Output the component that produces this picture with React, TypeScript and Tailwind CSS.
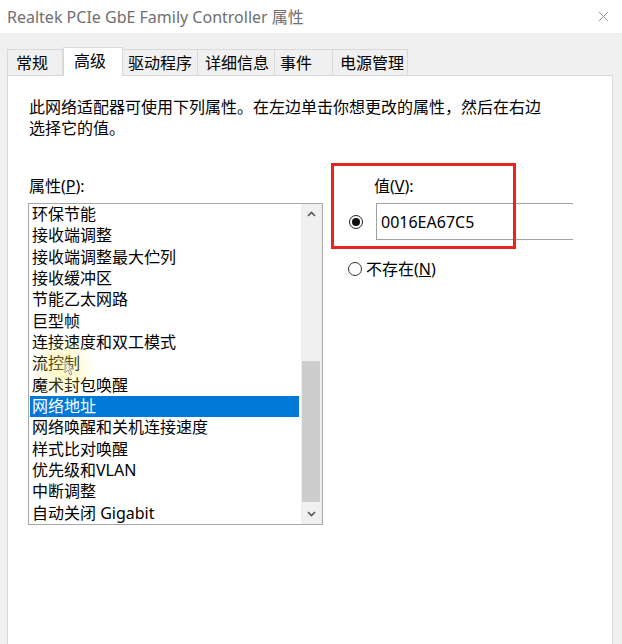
import { X } from "lucide-react";

const tabs = [
  { label: "常规", w: "w-[56px]", pl: "pl-[8px]" },
  { label: "高级", w: "w-[60px]", pl: "pl-[10px]", active: true },
  { label: "驱动程序", w: "w-[75px]", pl: "pl-[5px]" },
  { label: "详细信息", w: "w-[77px]", pl: "pl-[7px]" },
  { label: "事件", w: "w-[58px]", pl: "pl-[5px]" },
  { label: "电源管理", w: "w-[75px]", pl: "pl-[7px]" },
];

const props = [
  "环保节能",
  "接收端调整",
  "接收端调整最大伫列",
  "接收缓冲区",
  "节能乙太网路",
  "巨型帧",
  "连接速度和双工模式",
  "流控制",
  "魔术封包唤醒",
  "网络地址",
  "网络唤醒和关机连接速度",
  "样式比对唤醒",
  "优先级和VLAN",
  "中断调整",
  "自动关闭 Gigabit",
];

const Radio = ({ checked }: { checked?: boolean }) => (
  <span
    className={`w-[14px] h-[14px] rounded-full bg-white flex items-center justify-center shrink-0 ${
      checked ? "border-[1.5px] border-[#222]" : "border border-[#333]"
    }`}
  >
    {checked && <span className="w-[8px] h-[8px] rounded-full bg-[#111]" />}
  </span>
);

const Chevron = ({ up }: { up?: boolean }) => (
  <svg width="9" height="6" viewBox="0 0 9 6" className="text-[#555]">
    <polyline
      points={up ? "1,5 4.5,1.5 8,5" : "1,1 4.5,4.5 8,1"}
      fill="none"
      stroke="currentColor"
      strokeWidth="1.6"
    />
  </svg>
);

export default function App() {
  return (
    <div className="relative w-[622px] h-[644px] bg-[#f0f0f0] flex flex-col overflow-hidden text-black font-['Noto_Sans','Noto_Sans_CJK_SC',sans-serif]">
      {/* title bar */}
      <div className="h-[33px] bg-white flex items-center justify-between pl-[7px] pr-[10px] shrink-0">
        <span className="text-[16px] text-[#6f6f6f]">
          Realtek PCIe GbE Family Controller 属性
        </span>
        <X size={17} strokeWidth={1.2} className="text-[#8a8a8a]" />
      </div>

      {/* tabs */}
      <div className="h-[42px] flex items-end pl-[7px] shrink-0 relative z-10">
        {tabs.map((t, i) => (
          <div
            key={t.label}
            className={`${t.w} ${t.pl} text-[16px] flex items-center border-t border-r border-[#d9d9d9] ${
              i === 0 ? "border-l" : ""
            } ${
              t.active
                ? "h-[29px] -mb-px bg-white border-l pb-[2px]"
                : "h-[26px] bg-[#f0f0f0]"
            }`}
          >
            {t.label}
          </div>
        ))}
      </div>

      {/* panel */}
      <div className="flex-1 ml-[7px] mr-[9px] bg-white border border-b-0 border-[#d9d9d9] pl-[20px] pt-[21px]">
        <p className="text-[16px] leading-[21px] pl-[1px]">
          <span className="block whitespace-nowrap">
            此网络适配器可使用下列属性。在左边单击你想更改的属性，然后在右边
          </span>
          <span className="block">选择它的值。</span>
        </p>

        <div className="flex mt-[24px]">
          {/* left column */}
          <div className="pt-[13px]">
            <div className="text-[16px] leading-[21px] pl-[1px]">
              属性(<span className="underline">P</span>):
            </div>
            <div className="mt-[6px] w-[295px] h-[322px] border border-[#a8a8a8] flex">
              <ul className="flex-1 text-[16px]">
                {props.map((p) => (
                  <li
                    key={p}
                    className={`h-[21.33px] leading-[21.33px] whitespace-nowrap ${
                      p === "网络地址"
                        ? "bg-[#0078d7] text-white ml-[1px] mr-[2px] pl-[2px]"
                        : "pl-[3px]"
                    }`}
                  >
                    {p}
                  </li>
                ))}
              </ul>
              <div className="w-[21px] bg-[#f0f0f0] flex flex-col">
                <div className="h-[20px] flex items-center justify-center">
                  <Chevron up />
                </div>
                <div className="flex-1 flex flex-col">
                  <div className="h-[137px]" />
                  <div className="h-[141px] ml-[1px] mr-[2px] bg-[#cdcdcd]" />
                </div>
                <div className="h-[20px] flex items-center justify-center">
                  <Chevron />
                </div>
              </div>
            </div>
          </div>

          {/* right column */}
          <div className="relative flex-1 pt-[13px] pl-[26px]">
            <div className="text-[16px] leading-[21px] ml-[25px]">
              值(<span className="underline">V</span>):
            </div>
            <div className="flex items-center mt-[6px]">
              <Radio checked />
              <div className="ml-[13px] w-[197px] h-[37px] border-t border-l border-b border-[#a0a0a0] flex items-center pl-[4px] text-[16px]">
                0016EA67C5
              </div>
            </div>
            <div className="flex items-center mt-[18px] h-[21px] -ml-[1px]">
              <Radio />
              <span className="ml-[4px] text-[16px]">
                不存在(<span className="underline">N</span>)
              </span>
            </div>

            {/* red annotation box */}
            <div className="absolute left-[8px] top-0 w-[185px] h-[86px] border-[3px] border-[#e5261f]" />
          </div>
        </div>
      </div>

      {/* cursor highlight from recording */}
      <div className="absolute left-[30px] top-[334px] w-[66px] h-[66px] rounded-full bg-[radial-gradient(circle,rgba(255,236,90,0.45),rgba(255,236,90,0)_70%)] pointer-events-none" />
      <svg
        className="absolute left-[64px] top-[360px] pointer-events-none"
        width="10"
        height="16"
        viewBox="0 0 10 16"
      >
        <path
          d="M1 1 L1 13 L4 10 L6 15 L8 14 L6 9 L10 9 Z"
          fill="rgba(255,255,255,0.6)"
          stroke="#9a9a9a"
          strokeWidth="1"
        />
      </svg>
    </div>
  );
}
